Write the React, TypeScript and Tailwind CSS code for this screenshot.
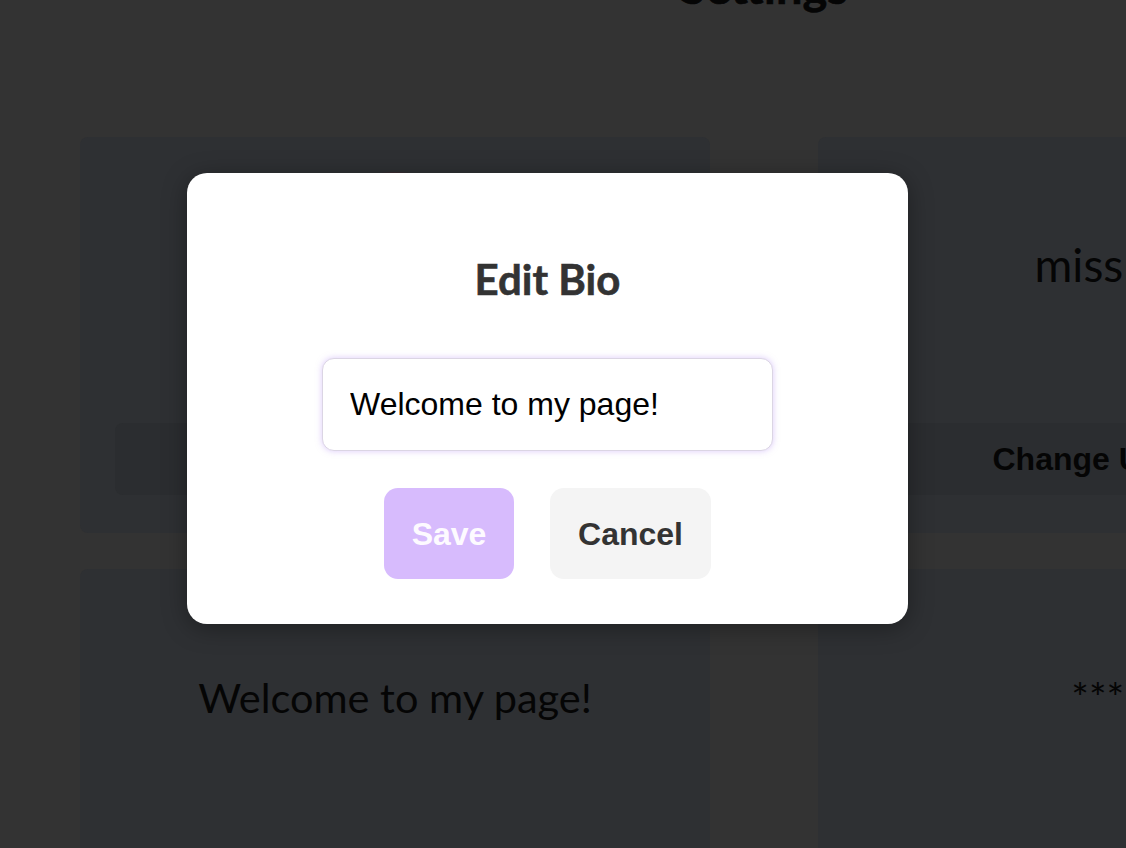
import React from "react";

const seg = { fontFamily: "Lato, 'Noto Sans', sans-serif" };
const arial = { fontFamily: "'Liberation Sans', Arial, sans-serif" };

export default function App() {
  return (
    <div className="relative h-[848px] w-full overflow-hidden bg-[#333333]">
      {/* page content behind overlay */}
      <div className="-mt-[43px] w-[1528px] px-[80px]">
        <h1
          className="h-[58px] text-center text-[47px] font-bold leading-[58px] text-[#050505] [-webkit-text-stroke:0.6px_#050505]"
          style={seg}
        >
          Settings
        </h1>
        <div className="mt-[122px] grid grid-cols-2 gap-x-[108px] gap-y-[36px]">
          {/* avatar card */}
          <div className="flex h-[396px] flex-col items-center rounded-[8px] bg-[#2e3033] pt-[35px]">
            <div className="h-[200px] w-[200px] rounded-full bg-[#3a2c30]" />
            <div
              className="mt-[51px] flex h-[72px] w-[560px] items-center justify-center rounded-[8px] bg-[#2b2d30] text-[32px] font-bold text-[#050505]"
              style={arial}
            >
              Change Picture
            </div>
          </div>
          {/* username card */}
          <div className="flex h-[396px] flex-col items-center rounded-[8px] bg-[#2e3033] pt-[100px]">
            <div className="h-[55px] text-[46px] leading-[55px] text-[#050505]" style={seg}>
              misspiggy
            </div>
            <div
              className="mt-[131px] flex h-[72px] w-[560px] items-center justify-center rounded-[8px] bg-[#2b2d30] text-[32px] font-bold text-[#050505]"
              style={arial}
            >
              Change Username
            </div>
          </div>
          {/* bio card */}
          <div className="flex h-[396px] flex-col items-center rounded-[8px] bg-[#2e3033] pt-[103px]">
            <div className="h-[50px] text-[41.5px] leading-[50px] text-[#050505]" style={seg}>
              Welcome to my page!
            </div>
          </div>
          {/* password card */}
          <div className="flex h-[396px] flex-col items-center rounded-[8px] bg-[#2e3033] pt-[103px]">
            <div className="h-[50px] text-[41.5px] leading-[50px] text-[#050505]" style={seg}>
              *******
            </div>
          </div>
        </div>
      </div>

      {/* modal */}
      <div className="absolute inset-0">
        <div className="absolute left-[187px] top-[173px] flex h-[451px] w-[721px] flex-col items-center rounded-[20px] bg-white pt-[81px] shadow-[0_4px_24px_rgba(0,0,0,0.35)]">
          <h2
            className="h-[50px] text-[42px] font-bold leading-[50px] text-[#333333] [-webkit-text-stroke:0.6px_#333333]"
            style={seg}
          >
            Edit Bio
          </h2>
          <input
            defaultValue="Welcome to my page!"
            className="mt-[54px] h-[93px] w-[451px] rounded-[12px] border border-[#dbd5e4] bg-white px-[27px] text-[32px] text-black shadow-[0_0_6px_rgba(185,150,245,0.5)] outline-none"
            style={arial}
          />
          <div className="mt-[37px] flex gap-[36px]">
            <button
              className="flex h-[91px] w-[130px] items-center justify-center rounded-[14px] bg-[#d7bbfd] text-[32px] font-bold text-[#fdfaff]"
              style={arial}
            >
              Save
            </button>
            <button
              className="flex h-[91px] w-[161px] items-center justify-center rounded-[14px] bg-[#f4f4f4] text-[32px] font-bold text-[#333333]"
              style={arial}
            >
              Cancel
            </button>
          </div>
        </div>
      </div>
    </div>
  );
}
